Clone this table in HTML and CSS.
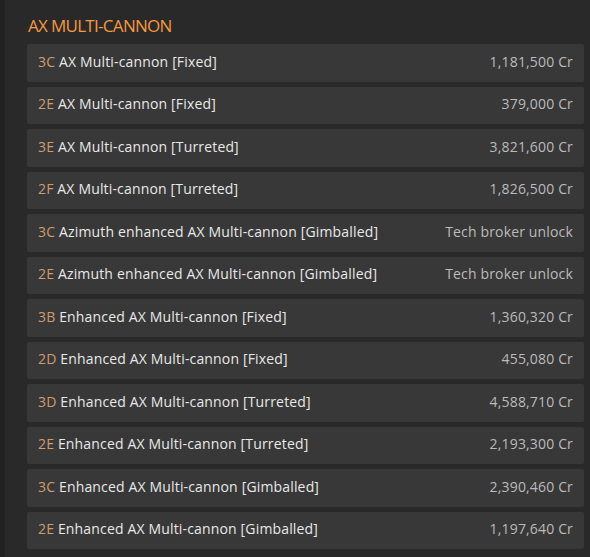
FILE: index.html
```html
<!DOCTYPE html>
<html>
<head>
<meta charset="utf-8">
<link rel="stylesheet" href="styles.css">
</head>
<body>
<div class="page">
  <h2 class="title">AX MULTI-CANNON</h2>
  <ul class="list">
    <li class="row"><span class="name"><span class="grade">3C</span> AX Multi-cannon [Fixed]</span><span class="price">1,181,500 Cr</span></li>
    <li class="row"><span class="name"><span class="grade">2E</span> AX Multi-cannon [Fixed]</span><span class="price">379,000 Cr</span></li>
    <li class="row"><span class="name"><span class="grade">3E</span> AX Multi-cannon [Turreted]</span><span class="price">3,821,600 Cr</span></li>
    <li class="row"><span class="name"><span class="grade">2F</span> AX Multi-cannon [Turreted]</span><span class="price">1,826,500 Cr</span></li>
    <li class="row"><span class="name"><span class="grade">3C</span> Azimuth enhanced AX Multi-cannon [Gimballed]</span><span class="price">Tech broker unlock</span></li>
    <li class="row"><span class="name"><span class="grade">2E</span> Azimuth enhanced AX Multi-cannon [Gimballed]</span><span class="price">Tech broker unlock</span></li>
    <li class="row"><span class="name"><span class="grade">3B</span> Enhanced AX Multi-cannon [Fixed]</span><span class="price">1,360,320 Cr</span></li>
    <li class="row"><span class="name"><span class="grade">2D</span> Enhanced AX Multi-cannon [Fixed]</span><span class="price">455,080 Cr</span></li>
    <li class="row"><span class="name"><span class="grade">3D</span> Enhanced AX Multi-cannon [Turreted]</span><span class="price">4,588,710 Cr</span></li>
    <li class="row"><span class="name"><span class="grade">2E</span> Enhanced AX Multi-cannon [Turreted]</span><span class="price">2,193,300 Cr</span></li>
    <li class="row"><span class="name"><span class="grade">3C</span> Enhanced AX Multi-cannon [Gimballed]</span><span class="price">2,390,460 Cr</span></li>
    <li class="row"><span class="name"><span class="grade">2E</span> Enhanced AX Multi-cannon [Gimballed]</span><span class="price">1,197,640 Cr</span></li>
  </ul>
</div>
</body>
</html>
```

FILE: styles.css
```css
html, body {
  margin: 0;
  padding: 0;
  background: #292929;
  height: 100%;
}
body {
  font-family: "Open Sans", "Noto Sans", sans-serif;
  overflow: hidden;
}
.page {
  border-left: 5px solid #222222;
  min-height: 100%;
  box-sizing: border-box;
  padding: 15px 6px 0 22px;
}
.title {
  margin: 0 0 8px 0;
  font-size: 17px;
  line-height: 21px;
  font-weight: 500;
  letter-spacing: -0.7px;
  color: #f5983e;
  padding-left: 1px;
}
.list {
  list-style: none;
  margin: 0;
  padding: 0;
  display: flex;
  flex-direction: column;
  gap: 5px;
}
.row {
  display: flex;
  justify-content: space-between;
  align-items: baseline;
  background: #383838;
  border-radius: 2px;
  padding: 8.5px 11px 11.5px 11px;
  font-size: 14px;
  line-height: 17.5px;
  letter-spacing: 0.16px;
}
.name {
  color: #e8e8e8;
}
.grade {
  color: #cf9c6c;
}
.price {
  color: #bbbbbb;
}
```
